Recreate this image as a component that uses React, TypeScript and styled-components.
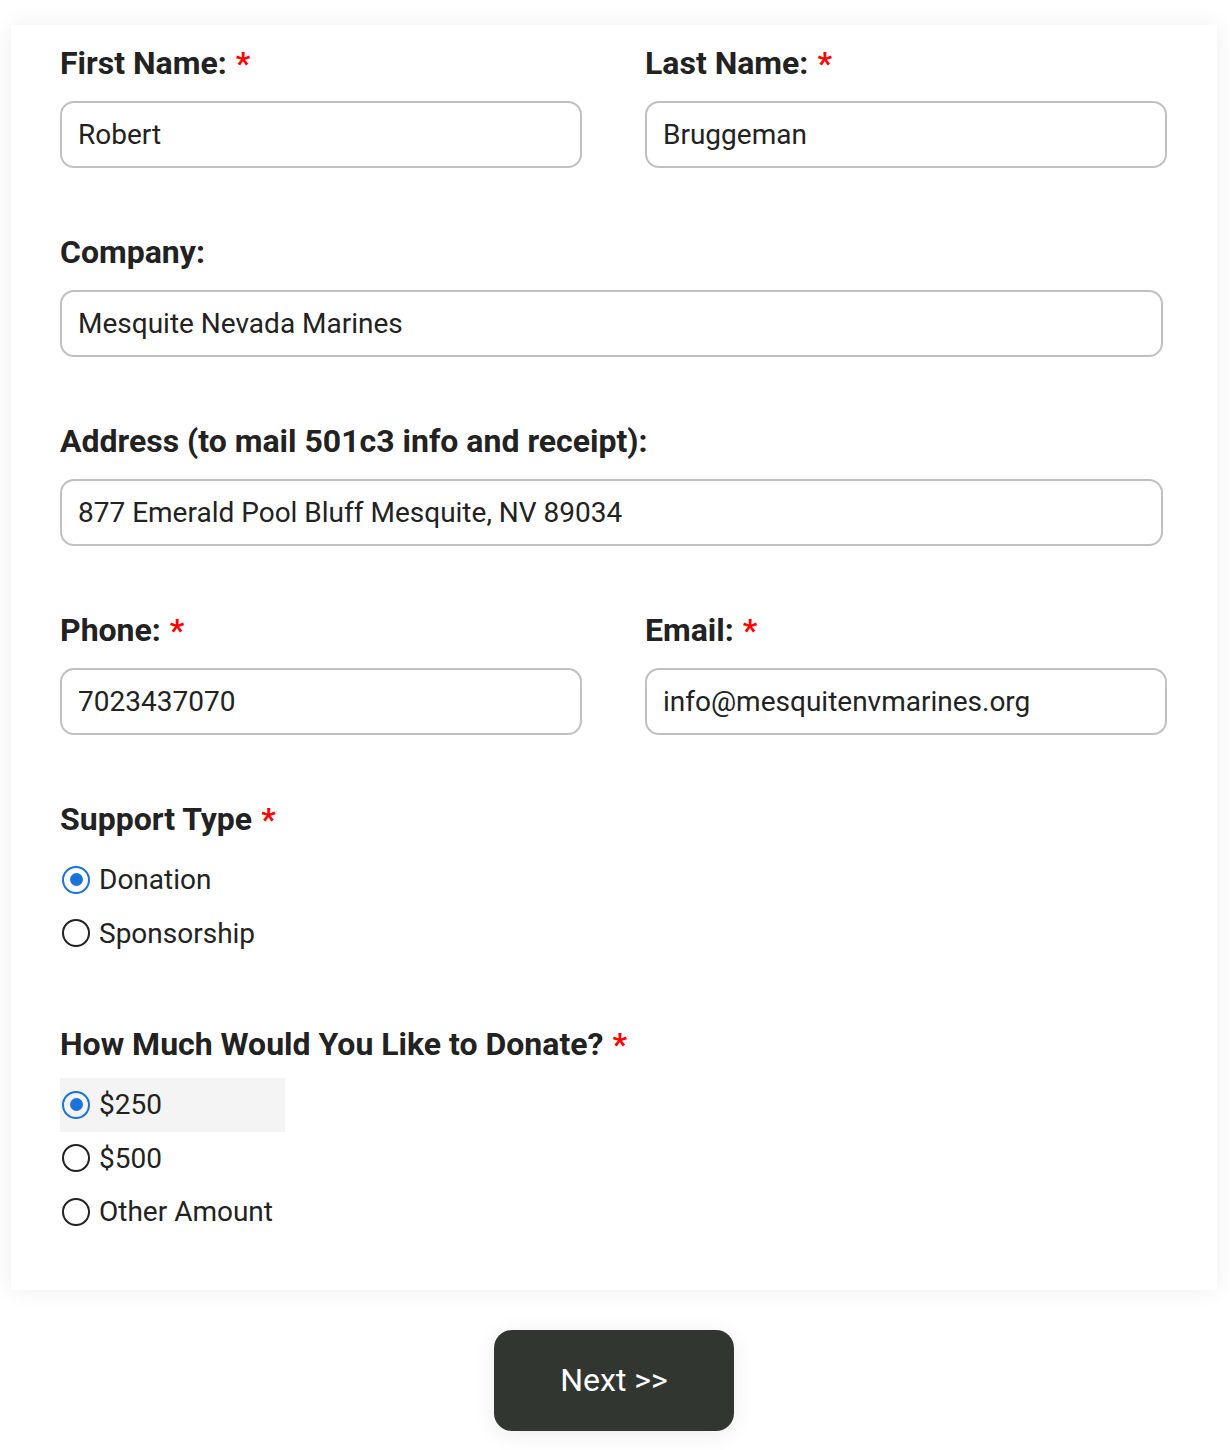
import { createGlobalStyle } from 'styled-components';
import styled from 'styled-components';

const GlobalStyle = createGlobalStyle`
  body {
    margin: 0;
    background: #ffffff;
    font-family: Roboto, 'Liberation Sans', sans-serif;
    color: #222222;
  }
`;

const Page = styled.div`
  display: flex;
  flex-direction: column;
  align-items: center;
  padding: 25px 13px 40px 11px;
`;

const Card = styled.form`
  width: 100%;
  box-sizing: border-box;
  background: #ffffff;
  box-shadow: 0 0 22px rgba(0, 0, 0, 0.07);
  padding: 19px 50px 51px 49px;
  display: flex;
  flex-direction: column;
  gap: 65px;
`;

const Row = styled.div`
  display: grid;
  grid-template-columns: 1fr 1fr;
  column-gap: 63px;
`;

const Field = styled.div<{ $full?: boolean }>`
  display: flex;
  flex-direction: column;
  gap: 19px;
  margin-right: ${(p) => (p.$full ? '4px' : '0')};
`;

const Label = styled.label`
  font-size: 32px;
  line-height: 38px;
  font-weight: 700;
  color: #222222;
`;

const Required = styled.span`
  color: #ff0000;
  margin-left: 9px;
`;

const Input = styled.input`
  height: 67px;
  box-sizing: border-box;
  border: 2px solid #c0c0c0;
  border-radius: 14px;
  padding: 0 16px;
  font-family: Roboto, 'Liberation Sans', sans-serif;
  font-size: 28px;
  color: #222222;
  background: #ffffff;
  outline: none;
  width: 100%;
`;

const Options = styled.div`
  display: flex;
  flex-direction: column;
  gap: 15px;
`;

const OptionList = styled.div`
  display: flex;
  flex-direction: column;
`;

const Option = styled.label<{ $active?: boolean }>`
  width: 225px;
  height: 53.5px;
  display: flex;
  align-items: center;
  gap: 9px;
  padding-left: 2px;
  box-sizing: border-box;
  background: ${(p) => (p.$active ? '#f4f4f4' : 'transparent')};
  font-size: 28px;
  color: #222222;
  white-space: nowrap;
`;

const Radio = styled.span<{ $checked?: boolean }>`
  width: 28px;
  height: 28px;
  flex-shrink: 0;
  box-sizing: border-box;
  border-radius: 50%;
  border: 2.5px solid ${(p) => (p.$checked ? '#1a73d9' : '#222222')};
  display: flex;
  align-items: center;
  justify-content: center;

  &::after {
    content: '';
    width: 13px;
    height: 13px;
    border-radius: 50%;
    background: ${(p) => (p.$checked ? '#1a73d9' : 'transparent')};
  }
`;

const NextButton = styled.button`
  margin-top: 40px;
  width: 240px;
  height: 101px;
  border: none;
  border-radius: 18px;
  background: #313630;
  color: #ffffff;
  font-family: Roboto, 'Liberation Sans', sans-serif;
  font-size: 32px;
  font-weight: 400;
  box-shadow: 0 4px 22px rgba(0, 0, 0, 0.08);
  cursor: pointer;
`;

function App() {
  return (
    <Page>
      <GlobalStyle />
      <Card onSubmit={(e) => e.preventDefault()}>
        <Row>
          <Field>
            <Label>
              First Name:<Required>*</Required>
            </Label>
            <Input defaultValue="Robert" />
          </Field>
          <Field>
            <Label>
              Last Name:<Required>*</Required>
            </Label>
            <Input defaultValue="Bruggeman" />
          </Field>
        </Row>
        <Field $full>
          <Label>Company:</Label>
          <Input defaultValue="Mesquite Nevada Marines" />
        </Field>
        <Field $full>
          <Label>Address (to mail 501c3 info and receipt):</Label>
          <Input defaultValue="877 Emerald Pool Bluff Mesquite, NV 89034" />
        </Field>
        <Row>
          <Field>
            <Label>
              Phone:<Required>*</Required>
            </Label>
            <Input defaultValue="7023437070" />
          </Field>
          <Field>
            <Label>
              Email:<Required>*</Required>
            </Label>
            <Input defaultValue="info@mesquitenvmarines.org" />
          </Field>
        </Row>
        <Options>
          <Label>
            Support Type<Required>*</Required>
          </Label>
          <OptionList>
            <Option>
              <Radio $checked />
              Donation
            </Option>
            <Option>
              <Radio />
              Sponsorship
            </Option>
          </OptionList>
        </Options>
        <Options>
          <Label>
            How Much Would You Like to Donate?<Required>*</Required>
          </Label>
          <OptionList>
            <Option $active>
              <Radio $checked />
              $250
            </Option>
            <Option>
              <Radio />
              $500
            </Option>
            <Option>
              <Radio />
              Other Amount
            </Option>
          </OptionList>
        </Options>
      </Card>
      <NextButton type="button">Next &gt;&gt;</NextButton>
    </Page>
  );
}

export default App;
